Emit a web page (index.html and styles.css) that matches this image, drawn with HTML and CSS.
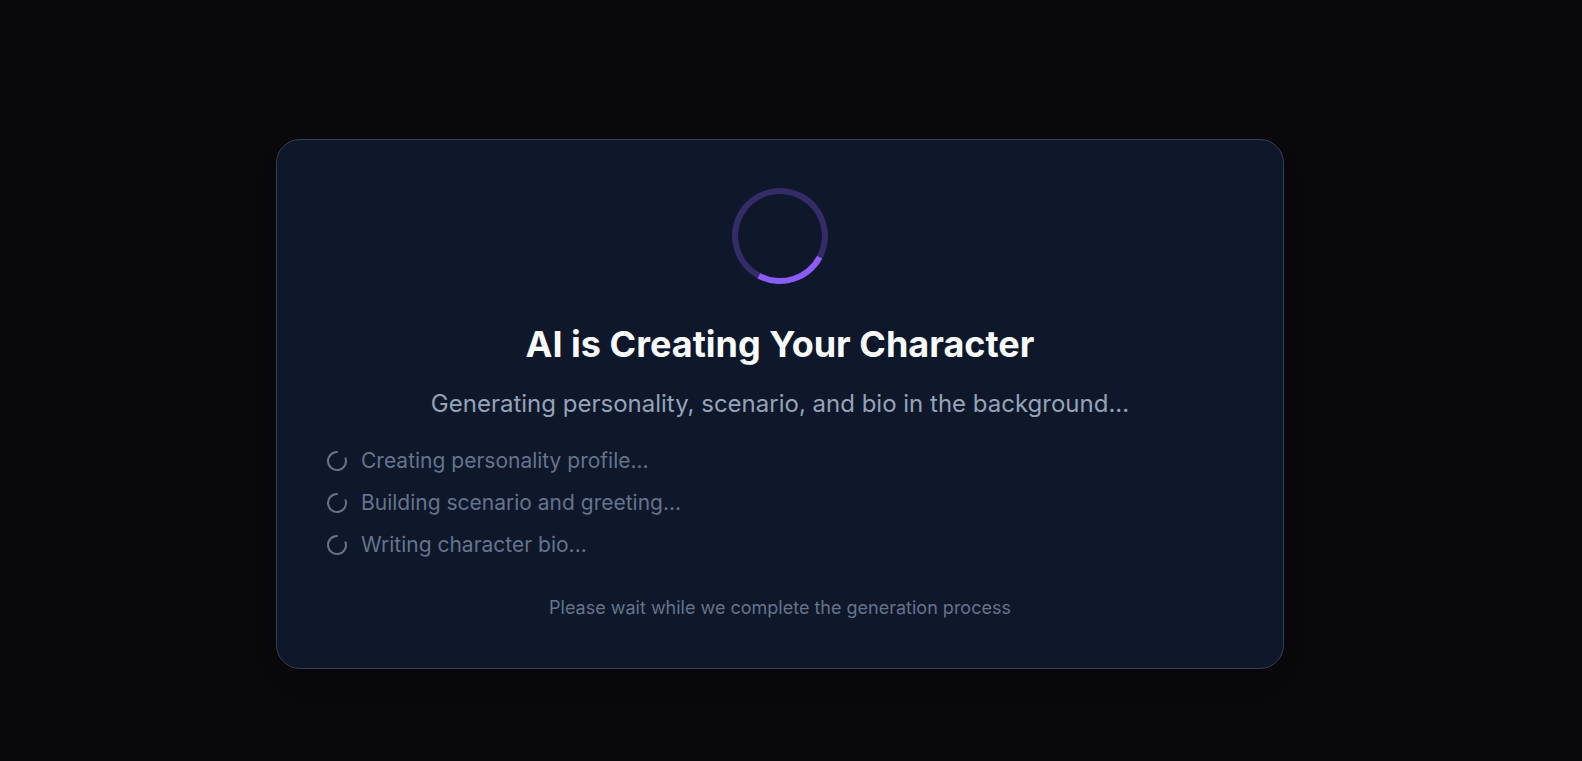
FILE: index.html
```html
<!DOCTYPE html>
<html lang="en">
<head>
<meta charset="utf-8">
<title>Creating Your Character</title>
<link rel="stylesheet" href="styles.css">
</head>
<body>
<main class="page">
  <section class="card" role="status">
    <div class="spinner"></div>
    <h1 class="title">AI is Creating Your Character</h1>
    <p class="subtitle">Generating personality, scenario, and bio in the background...</p>
    <ul class="steps">
      <li class="step"><svg class="step-icon" viewBox="0 0 24 24"><path d="M21 12a9 9 0 1 1-6.219-8.56"/></svg>Creating personality profile...</li>
      <li class="step"><svg class="step-icon" viewBox="0 0 24 24"><path d="M21 12a9 9 0 1 1-6.219-8.56"/></svg>Building scenario and greeting...</li>
      <li class="step"><svg class="step-icon" viewBox="0 0 24 24"><path d="M21 12a9 9 0 1 1-6.219-8.56"/></svg>Writing character bio...</li>
    </ul>
    <p class="note">Please wait while we complete the generation process</p>
  </section>
</main>
</body>
</html>
```
FILE: styles.css
```css
* {
  box-sizing: border-box;
}

body {
  margin: 0;
  background: #09090b;
  font-family: Inter, sans-serif;
}

.page {
  display: flex;
  justify-content: center;
  align-items: center;
  min-height: 100vh;
  padding: 46px 22px 0 0;
}

.card {
  width: 100%;
  max-width: 1008px;
  padding: 48px;
  border: 1px solid #334155;
  border-radius: 24px;
  background: #0f172a;
  box-shadow: 0 15px 22px -4px rgba(0, 0, 0, 0.1);
  text-align: center;
}

.spinner {
  width: 96px;
  height: 96px;
  margin: 0 auto 36px;
  border: 6px solid rgba(139, 92, 246, 0.3);
  border-top-color: #8b5cf6;
  border-radius: 50%;
  transform: rotate(163deg);
}

.title {
  margin: 0 0 18px;
  font-size: 36px;
  line-height: 48px;
  font-weight: 700;
  color: #f8fafc;
}

.subtitle {
  margin: 0 0 24px;
  font-size: 24px;
  line-height: 36px;
  color: #94a3b8;
}

.steps {
  display: flex;
  flex-direction: column;
  gap: 12px;
  margin: 0 0 36px;
  padding: 0;
  list-style: none;
}

.step {
  display: flex;
  align-items: center;
  gap: 12px;
  font-size: 21px;
  line-height: 30px;
  color: #64748b;
}

.step-icon {
  width: 24px;
  height: 24px;
  fill: none;
  stroke: currentColor;
  stroke-width: 2;
  stroke-linecap: round;
  transform: rotate(-18deg);
}

.note {
  margin: 0;
  font-size: 18px;
  line-height: 24px;
  color: #64748b;
}
```
